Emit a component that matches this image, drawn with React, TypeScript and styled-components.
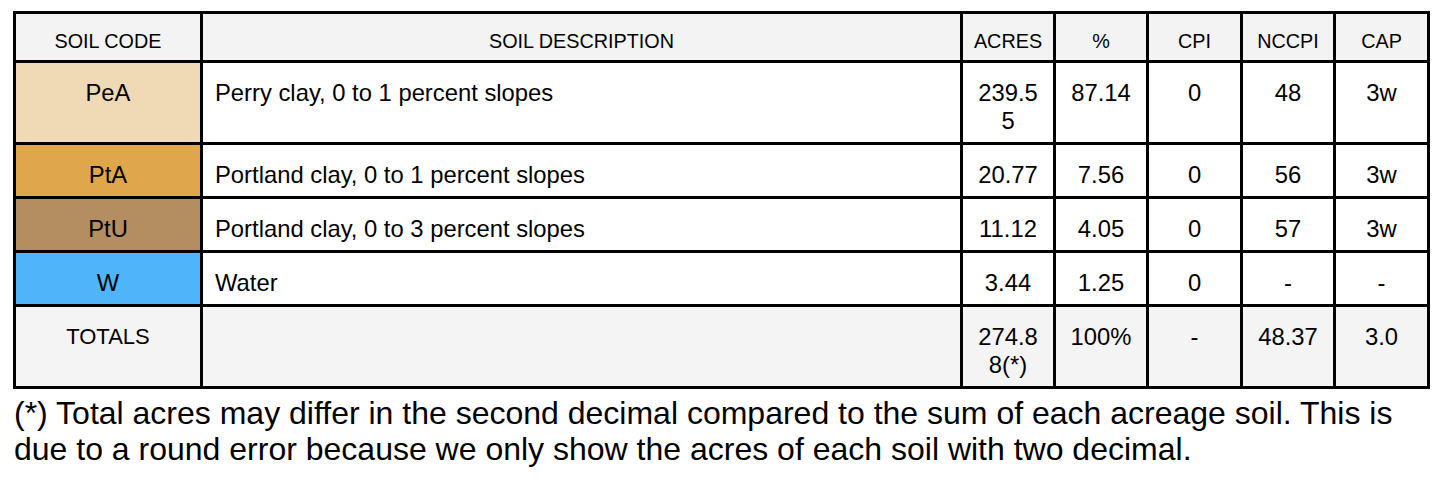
import styled, { createGlobalStyle } from 'styled-components'

const GlobalStyle = createGlobalStyle`
  html, body {
    margin: 0;
    padding: 0;
    background: #ffffff;
  }
  body {
    font-family: "Liberation Sans", Arial, Helvetica, sans-serif;
    color: #000;
  }
`

const Page = styled.div`
  padding: 11px 13px 0 13px;
  width: 1416px;
`

const Table = styled.table`
  width: 1416px;
  border-collapse: collapse;
  table-layout: fixed;
  border: 3px solid #000;
`

const HeadCell = styled.th`
  background: #f3f3f3;
  border: 3px solid #000;
  font-weight: 400;
  font-size: 19.8px;
  line-height: 28px;
  padding: 13px 6px 5px;
  text-align: center;
  vertical-align: top;
`

const Cell = styled.td<{ $bg?: string; $left?: boolean; $size?: number }>`
  background: ${({ $bg }) => $bg || '#ffffff'};
  border: 3px solid #000;
  font-size: ${({ $size }) => ($size ? `${$size}px` : '23.8px')};
  line-height: 28px;
  padding: 16px 10px 7px ${({ $left }) => ($left ? '12px' : '10px')};
  text-align: ${({ $left }) => ($left ? 'left' : 'center')};
  vertical-align: top;
  word-break: break-all;
`

const Note = styled.p`
  margin: 6px 0 0;
  font-size: 32px;
  line-height: 36px;
  padding-left: 1px;
`

type Row = {
  code: string
  color: string
  desc: string
  acres: string
  pct: string
  cpi: string
  nccpi: string
  cap: string
}

const rows: Row[] = [
  { code: 'PeA', color: '#f0dab5', desc: 'Perry clay, 0 to 1 percent slopes', acres: '239.55', pct: '87.14', cpi: '0', nccpi: '48', cap: '3w' },
  { code: 'PtA', color: '#e0a64b', desc: 'Portland clay, 0 to 1 percent slopes', acres: '20.77', pct: '7.56', cpi: '0', nccpi: '56', cap: '3w' },
  { code: 'PtU', color: '#b48d60', desc: 'Portland clay, 0 to 3 percent slopes', acres: '11.12', pct: '4.05', cpi: '0', nccpi: '57', cap: '3w' },
  { code: 'W', color: '#50b4fb', desc: 'Water', acres: '3.44', pct: '1.25', cpi: '0', nccpi: '-', cap: '-' },
]

const widths = [187, 760, 93, 93, 94, 93, 94]
const heads = ['SOIL CODE', 'SOIL DESCRIPTION', 'ACRES', '%', 'CPI', 'NCCPI', 'CAP']

export default function App() {
  return (
    <>
      <GlobalStyle />
      <Page>
        <Table>
          <colgroup>
            {widths.map((w, i) => (
              <col key={i} style={{ width: w }} />
            ))}
          </colgroup>
          <thead>
            <tr>
              {heads.map((h) => (
                <HeadCell key={h}>{h}</HeadCell>
              ))}
            </tr>
          </thead>
          <tbody>
            {rows.map((r) => (
              <tr key={r.code}>
                <Cell $bg={r.color}>{r.code}</Cell>
                <Cell $left>{r.desc}</Cell>
                <Cell>{r.acres}</Cell>
                <Cell>{r.pct}</Cell>
                <Cell>{r.cpi}</Cell>
                <Cell>{r.nccpi}</Cell>
                <Cell>{r.cap}</Cell>
              </tr>
            ))}
            <tr>
              <Cell $bg="#f4f4f4" $size={22}>TOTALS</Cell>
              <Cell $bg="#f4f4f4" $left></Cell>
              <Cell $bg="#f4f4f4">274.88(*)</Cell>
              <Cell $bg="#f4f4f4">100%</Cell>
              <Cell $bg="#f4f4f4">-</Cell>
              <Cell $bg="#f4f4f4">48.37</Cell>
              <Cell $bg="#f4f4f4">3.0</Cell>
            </tr>
          </tbody>
        </Table>
        <Note>
          (*) Total acres may differ in the second decimal compared to the sum of each acreage soil. This is
          due to a round error because we only show the acres of each soil with two decimal.
        </Note>
      </Page>
    </>
  )
}
